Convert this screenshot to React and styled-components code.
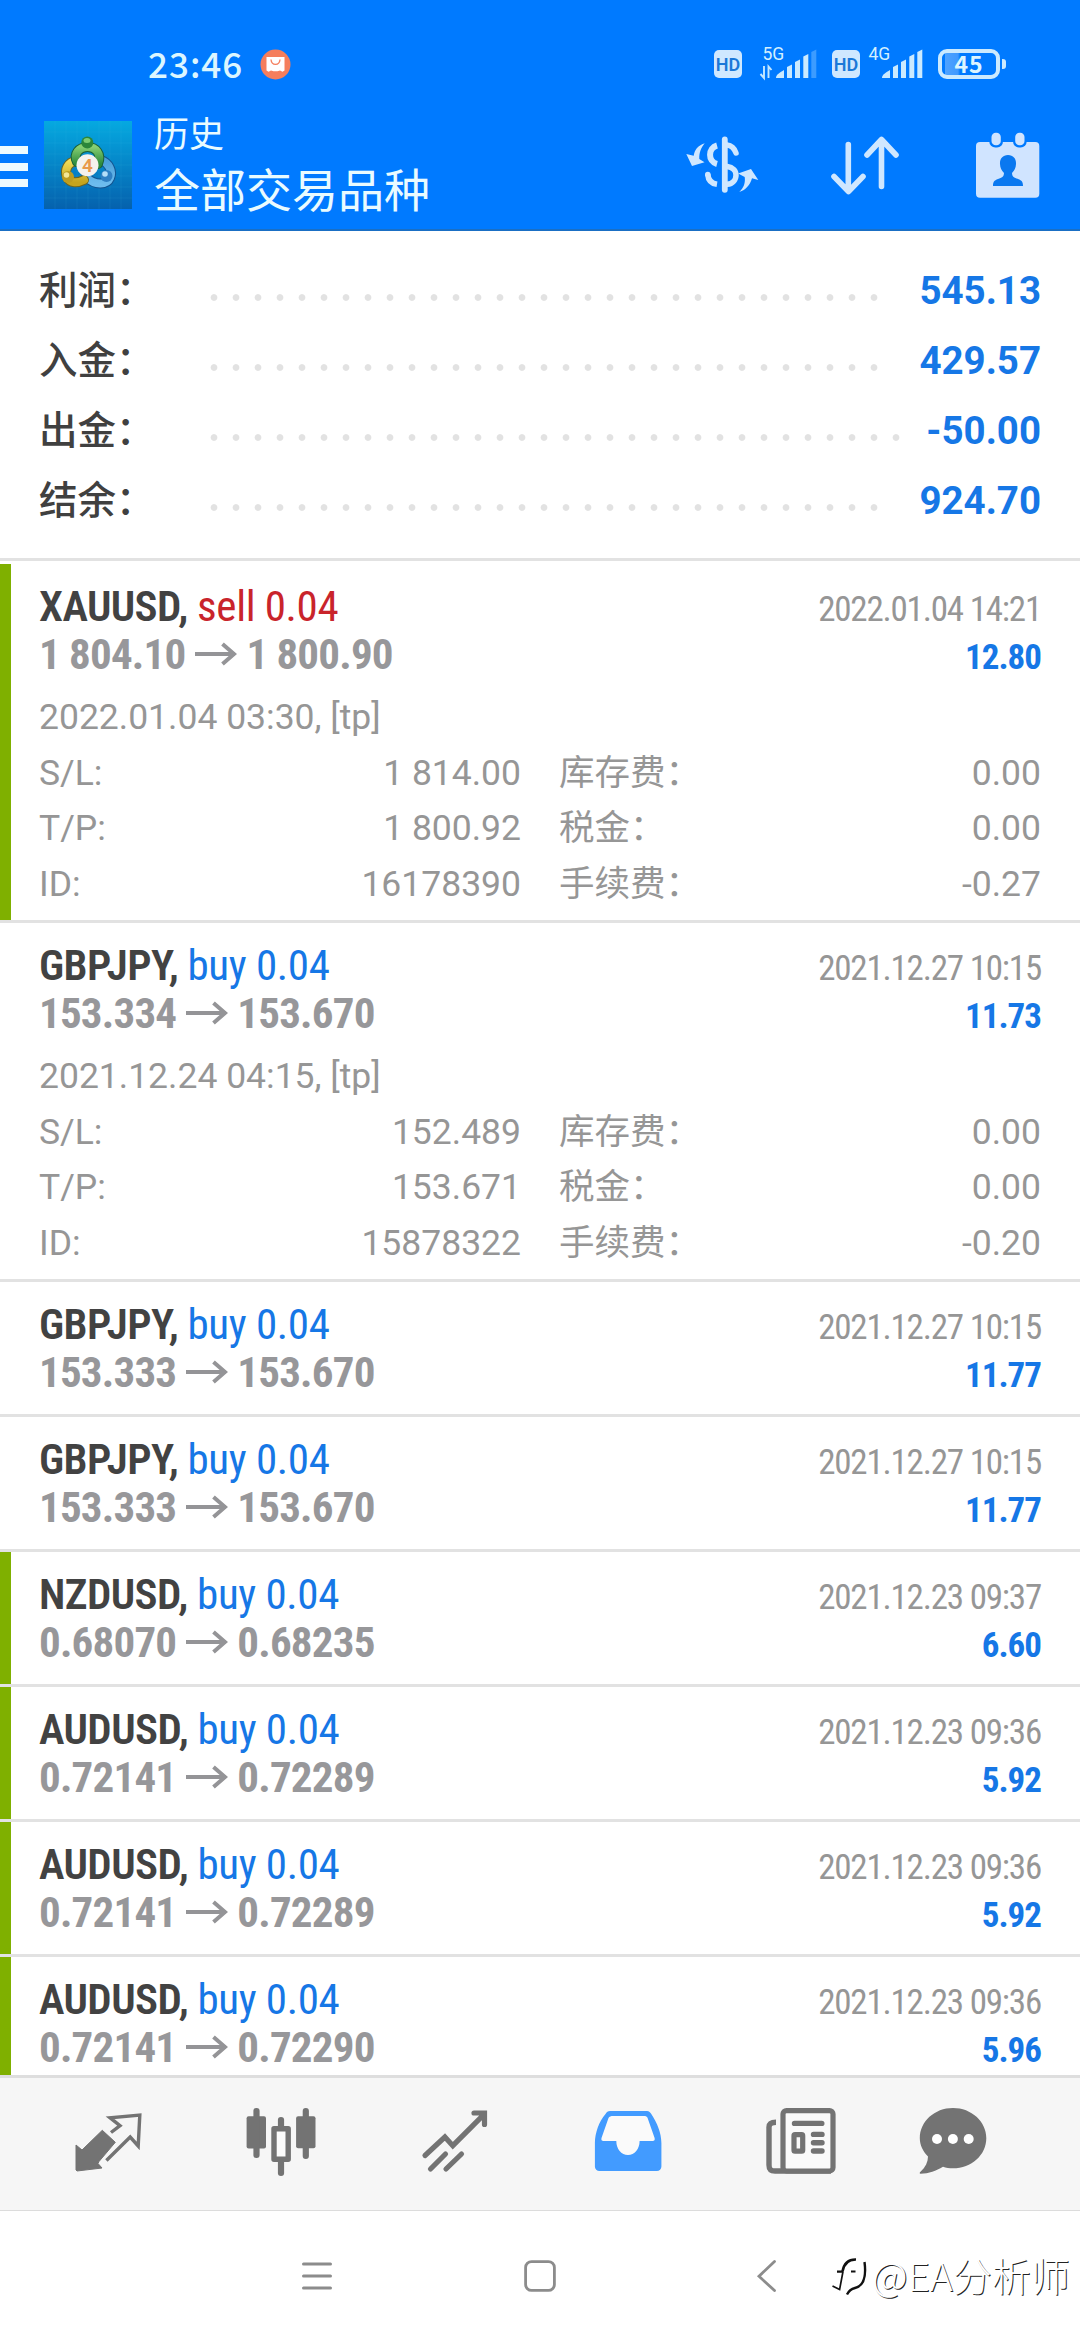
import styled, { createGlobalStyle } from "styled-components";

const summary = [
  { label: "利润：", value: "545.13", dots: 31 },
  { label: "入金：", value: "429.57", dots: 31 },
  { label: "出金：", value: "-50.00", dots: 32 },
  { label: "结余：", value: "924.70", dots: 31 },
];

const deals = [
  {
    symbol: "XAUUSD",
    side: "sell",
    volume: "0.04",
    open: "1 804.10",
    close: "1 800.90",
    time: "2022.01.04 14:21",
    profit: "12.80",
    marked: true,
    details: {
      opened: "2022.01.04 03:30, [tp]",
      sl: "1 814.00",
      tp: "1 800.92",
      id: "16178390",
      swap: "0.00",
      tax: "0.00",
      fee: "-0.27",
    },
  },
  {
    symbol: "GBPJPY",
    side: "buy",
    volume: "0.04",
    open: "153.334",
    close: "153.670",
    time: "2021.12.27 10:15",
    profit: "11.73",
    details: {
      opened: "2021.12.24 04:15, [tp]",
      sl: "152.489",
      tp: "153.671",
      id: "15878322",
      swap: "0.00",
      tax: "0.00",
      fee: "-0.20",
    },
  },
  { symbol: "GBPJPY", side: "buy", volume: "0.04", open: "153.333", close: "153.670", time: "2021.12.27 10:15", profit: "11.77" },
  { symbol: "GBPJPY", side: "buy", volume: "0.04", open: "153.333", close: "153.670", time: "2021.12.27 10:15", profit: "11.77" },
  { symbol: "NZDUSD", side: "buy", volume: "0.04", open: "0.68070", close: "0.68235", time: "2021.12.23 09:37", profit: "6.60", marked: true },
  { symbol: "AUDUSD", side: "buy", volume: "0.04", open: "0.72141", close: "0.72289", time: "2021.12.23 09:36", profit: "5.92", marked: true },
  { symbol: "AUDUSD", side: "buy", volume: "0.04", open: "0.72141", close: "0.72289", time: "2021.12.23 09:36", profit: "5.92", marked: true },
  { symbol: "AUDUSD", side: "buy", volume: "0.04", open: "0.72141", close: "0.72290", time: "2021.12.23 09:36", profit: "5.96", marked: true },
];

export default function App() {
  return (
    <>
      <GlobalStyle />
      <SCScreen>
        <SCTopArea>
          <StatusBar />
          <TitleBar />
        </SCTopArea>
        <SCSummary>
          {summary.map((row) => (
            <SCSummaryRow key={row.label}>
              <SCSummaryLabel>{row.label}</SCSummaryLabel>
              <SCDots $count={row.dots} />
              <SCSummaryValue>{row.value}</SCSummaryValue>
            </SCSummaryRow>
          ))}
        </SCSummary>
        <SCDealList>
          {deals.map((deal, index) => (
            <Deal key={index} deal={deal} />
          ))}
        </SCDealList>
        <TabBar />
        <SystemBar />
      </SCScreen>
    </>
  );
}

function StatusBar() {
  return (
    <SCStatusBar>
      <SCClock>23:46</SCClock>
      <svg width="31" height="31" viewBox="0 0 31 31">
        <circle cx="15.5" cy="15.5" r="15" fill="#f57e5c" />
        <path d="M6.5 8h18v13.5l-2 1.2-2.5-1.2-2.5.8h-4l-2.5-.8-2.5 1.2-2-1.2z" fill="#fff" />
        <path d="M11 10.500c.5 6.500 8.500 6.500 9 0" fill="none" stroke="#f57e5c" strokeWidth="1.300" />
      </svg>
      <SCStatusIcons>
        <SCHdBadge>HD</SCHdBadge>
        <Signal label="5G" $left={16} bars={4} transfer />
        <SCHdBadge $left={14}>HD</SCHdBadge>
        <Signal label="4G" $left={4} bars={5} />
        <SCBattery>
          <SCBatteryBody>45</SCBatteryBody>
          <SCBatteryNub />
        </SCBattery>
      </SCStatusIcons>
    </SCStatusBar>
  );
}

function Signal({ label, bars, transfer, $left }) {
  const shapes = [
    "M18 32c0-3.500 4-5.500 8-8v8z",
    "M29 21l5-2.500V32h-5z",
    "M37 16l5-2.500V32h-5z",
    "M45.300 10.500l5-2.500v24h-5z",
    "M53.300 6l5-2.500V32h-5z",
  ];
  return (
    <SCSignal $left={$left} width="60" height="44" viewBox="0 -5 60 44">
      <text x="4.500" y="13.500" fontSize="17.500" fill="#d3f0ff">
        {label}
      </text>
      {transfer && (
        <path d="M6 20v12l-3.500-4M10.500 32V20.500l3 3.500" fill="none" stroke="#c5e8ff" strokeWidth="1.900" />
      )}
      {shapes.map((d, i) => (
        <path key={d} d={d} fill="#cbeaff" opacity={i < bars ? 1 : 0.3} />
      ))}
    </SCSignal>
  );
}

function TitleBar() {
  return (
    <SCTitleBar>
      <SCMenuButton>
        <i />
        <i />
        <i />
      </SCMenuButton>
      <Logo />
      <SCTitles>
        <SCCaption>历史</SCCaption>
        <SCTitle>全部交易品种</SCTitle>
      </SCTitles>
      <SCActions>
        <svg width="78" height="64" viewBox="0 0 78 64">
          <g fill="none" stroke="#cfe7ff" strokeLinecap="round">
            <path d="M40.800 6.500v50.300" strokeWidth="5.800" />
            <path d="M43 12c5 .5 7.500 3.500 9 8" strokeWidth="5.500" />
            <path d="M43.300 33.500c5.500.8 8.700 4 8.700 8.500 0 5-3.500 8.800-8.700 9.300" strokeWidth="5.500" />
            <path d="M23.800 41.500c.4 5.500 4 9 9.200 9.800" strokeWidth="5.600" strokeLinecap="butt" />
            <path d="M33 12.500c-9 2.500-9.500 16 0 18.500" strokeWidth="6" strokeLinecap="butt" />
          </g>
          <circle cx="23.800" cy="41.500" r="2.800" fill="#cfe7ff" />
          <path
            d="M20.700 10.300C13.500 12.500 10.500 17.500 9.700 22.700L2.300 21 8 33l12.500-3.800-5.200-3.200c-.3-6 1.700-11.500 5.400-15.700zM55.300 59C60 54.700 61.500 49.500 60.700 44l-6.600-3.500L67 36l7.300 11-6.300-1.700C66 52 62 57 55.300 59z"
            fill="#cfe7ff"
          />
        </svg>
        <svg width="75" height="64" viewBox="0 0 75 64">
          <path
            d="M17.300 11.500v46M3 43.500l14.500 15 14.500-15M50.500 53.500V7M36 22L50.500 6.500 65 22"
            fill="none"
            stroke="#cfe7ff"
            strokeWidth="5.600"
            strokeLinecap="round"
            strokeLinejoin="round"
          />
        </svg>
        <svg width="66" height="68" viewBox="0 0 66 68">
          <rect x="1" y="11" width="63.300" height="55.700" rx="4" fill="#d0e4ff" />
          <rect x="14.300" y="0" width="13.700" height="16.500" rx="6" fill="#007aff" />
          <rect x="38" y="0" width="13.700" height="16.500" rx="6" fill="#007aff" />
          <rect x="16.500" y="1.700" width="9.300" height="12.600" rx="4.300" fill="#d0e4ff" />
          <rect x="40.200" y="1.700" width="9.300" height="12.600" rx="4.300" fill="#d0e4ff" />
          <path
            d="M33 24c5.500 0 8.300 4 8 9-.2 4-1.500 6.500-4 9 .2 4 2 4.500 6 6s5 3 5 7H18c0-4 1-5.500 5-7s5.800-2 6-6c-2.500-2.500-3.800-5-4-9-.3-5 2.500-9 8-9z"
            fill="#0a78f0"
          />
        </svg>
      </SCActions>
    </SCTitleBar>
  );
}

function Logo() {
  return (
    <SCLogo width="88" height="88" viewBox="0 0 88 88">
      <defs>
        <linearGradient id="tile" x1="0" y1="0" x2="0" y2="1">
          <stop offset="0" stopColor="#05a9e0" />
          <stop offset=".5" stopColor="#0585c8" />
          <stop offset="1" stopColor="#0561ad" />
        </linearGradient>
        <linearGradient id="green" x1="0" y1="0" x2="0" y2="1">
          <stop offset="0" stopColor="#86cf72" />
          <stop offset="1" stopColor="#2c8a3c" />
        </linearGradient>
        <linearGradient id="yellow" x1="0" y1="0" x2="0" y2="1">
          <stop offset="0" stopColor="#f0dc58" />
          <stop offset="1" stopColor="#c4a41e" />
        </linearGradient>
        <linearGradient id="blue" x1="0" y1="0" x2="0" y2="1">
          <stop offset="0" stopColor="#4a9fd8" />
          <stop offset="1" stopColor="#6cbcee" />
        </linearGradient>
      </defs>
      <rect width="88" height="88" fill="url(#tile)" />
      <path
        d="M11 0v88M22 0v88M33 0v88M44 0v88M55 0v88M66 0v88M77 0v88M0 11h88M0 22h88M0 33h88M0 44h88M0 55h88M0 66h88M0 77h88"
        stroke="#5cc4f0"
        strokeOpacity=".1"
      />
      <g fill="none" strokeLinecap="round">
        <path d="M57 39c8 3 12 11 9 18s-15 8-24-1" stroke="#135490" strokeWidth="10" />
        <path d="M57 39c8 3 12 11 9 18s-15 8-24-1" stroke="url(#blue)" strokeWidth="8" />
        <path d="M32 40c-8 1-12 9-9 16s11 6 17 3" stroke="#6c6520" strokeWidth="10" />
        <path d="M32 40c-8 1-12 9-9 16s11 6 17 3" stroke="url(#yellow)" strokeWidth="8" />
        <path d="M33 41c-4-8 2-15 10.500-15S58 33 54 43" stroke="#195f38" strokeWidth="10" />
        <path d="M33 41c-4-8 2-15 10.500-15S58 33 54 43" stroke="url(#green)" strokeWidth="8" />
      </g>
      <circle cx="43.300" cy="21.500" r="6" fill="#2b863a" />
      <ellipse cx="43" cy="19.500" rx="3.500" ry="2.500" fill="#7ccc74" />
      <circle cx="24" cy="56" r="6" fill="#bd9d20" />
      <circle cx="22.500" cy="54" r="2.800" fill="#f4e795" />
      <circle cx="62.500" cy="55" r="6" fill="#2f80c4" />
      <circle cx="61" cy="53" r="2.800" fill="#b4def8" />
      <circle cx="43.500" cy="44.300" r="11" fill="#f4f2ee" />
      <text x="43.500" y="51" textAnchor="middle" fontSize="19" fontWeight="600" fill="#e89a4c">
        4
      </text>
    </SCLogo>
  );
}

function Deal({ deal }) {
  const { details } = deal;
  return (
    <SCDeal $marked={deal.marked} $open={!!details}>
      <SCDealLine>
        <SCSymbol>
          {deal.symbol},{" "}
          <SCSide $side={deal.side}>
            {deal.side} {deal.volume}
          </SCSide>
        </SCSymbol>
        <SCTime>{deal.time}</SCTime>
      </SCDealLine>
      <SCDealLine>
        <SCPrices>
          {deal.open}
          <svg width="42" height="26" viewBox="0 0 42 26">
            <path d="M0 13h39M27.500 3l11.500 10-11.500 10" fill="none" stroke="#949497" strokeWidth="4" />
          </svg>
          {deal.close}
        </SCPrices>
        <SCProfit>{deal.profit}</SCProfit>
      </SCDealLine>
      {details && (
        <SCDetails>
          <SCOpened>{details.opened}</SCOpened>
          <Pair label="S/L:" value={details.sl} />
          <Pair label="库存费：" value={details.swap} />
          <Pair label="T/P:" value={details.tp} />
          <Pair label="税金：" value={details.tax} />
          <Pair label="ID:" value={details.id} />
          <Pair label="手续费：" value={details.fee} />
        </SCDetails>
      )}
    </SCDeal>
  );
}

function Pair({ label, value }) {
  return (
    <SCPair>
      <span>{label}</span>
      <span>{value}</span>
    </SCPair>
  );
}

function TabBar() {
  return (
    <SCTabBar>
      <SCTabIcon viewBox="0 0 80 80">
        <path
          d="M8 41l6 5 20.300-19.700 13 12L31 57.500l-1 2 4 4.500L9 67l-1-1z"
          fill="#737373"
          stroke="#737373"
          strokeLinejoin="round"
        />
        <path d="M43 28.500l9-6.800-10-8 29.800-2.700-1.600 31-8-9-23.800 23.500" fill="none" stroke="#737373" strokeWidth="3.400" />
      </SCTabIcon>
      <SCTabIcon viewBox="0 0 80 80">
        <g fill="#737373">
          <rect x="5.600" y="12.300" width="19.400" height="32.300" rx="2" />
          <rect x="12.400" y="4" width="6.200" height="50" rx="3" />
          <rect x="55.100" y="12.300" width="19.400" height="32" rx="2" />
          <rect x="61.700" y="4" width="6.200" height="51" rx="3" />
          <rect x="36.900" y="13" width="6.200" height="14" rx="3" />
          <rect x="36.900" y="55" width="6.200" height="17" rx="3" />
        </g>
        <rect x="33" y="24.800" width="14.200" height="30.500" fill="#fbfbfb" stroke="#737373" strokeWidth="5.400" strokeLinejoin="round" />
      </SCTabIcon>
      <SCTabIcon viewBox="0 0 80 80">
        <path
          d="M10 51.500L29.900 33l7.900 8.700 30-30M59 9h10.500v11.500M15.500 65l15-15M31 65l15.500-15"
          fill="none"
          stroke="#737373"
          strokeWidth="5.200"
          strokeLinecap="round"
        />
      </SCTabIcon>
      <SCTabIcon viewBox="0 0 80 80">
        <path
          d="M22 7h37c2 0 3.500 1.500 4.300 3 6 9 10 19 10.100 29v23.500a4.500 4.500 0 0 1-4.500 4.500H11.400A4.500 4.500 0 0 1 6.900 62.500V39C7 29 11 17.500 17.500 10 18.500 8 20 7 22 7z"
          fill="#429bff"
        />
        <path
          d="M25 12h31c1.800 0 3 .6 3.600 2l7 20c.5 1.700-.2 3-2 3H51.600c0 8-5 14-11.600 14s-11.700-6-11.700-14H15.500c-1.800 0-2.500-1.300-2-3l7-20c.8-1.400 2.500-2 4.500-2z"
          fill="#fafafa"
        />
      </SCTabIcon>
      <SCTabIcon viewBox="0 0 80 80">
        <path
          d="M15 18.300c-4.500 0-7 1.700-7 5V61c0 4.500 2 6 6 6h56"
          fill="none"
          stroke="#737373"
          strokeWidth="5.400"
        />
        <rect x="22" y="6.600" width="50" height="60.400" rx="3.500" fill="#fafafa" stroke="#737373" strokeWidth="5.200" />
        <path
          d="M33.500 19.400h27.300M52.500 30.400h8.500M52.500 38.700h8.500M52.500 47h8.500"
          stroke="#737373"
          strokeWidth="5.400"
          strokeLinecap="round"
        />
        <rect x="33" y="30.700" width="8.700" height="16.500" rx="1" fill="none" stroke="#737373" strokeWidth="5.200" />
      </SCTabIcon>
      <SCTabIcon viewBox="0 0 80 80">
        <path
          d="M40 4c18.500 0 33.300 13.500 33.300 30.200S58.500 64.300 40 64.300c-3.500 0-7-.5-10-1.500-7 4-14 7-22.500 7-1.300 0-.8-1.300 0-2C12.500 63 15 58 15 52.500 10 47.500 6.800 41 6.800 34.200 6.800 17.500 21.500 4 40 4z"
          fill="#737373"
        />
        <circle cx="24" cy="35" r="5" fill="#fff" />
        <circle cx="39.900" cy="35" r="5" fill="#fff" />
        <circle cx="55.700" cy="35" r="5" fill="#fff" />
      </SCTabIcon>
    </SCTabBar>
  );
}

function SystemBar() {
  return (
    <SCSystemBar>
      <svg width="34" height="34" viewBox="0 0 34 34">
        <path d="M3.500 5h27M3.500 17h27M3.500 29h27" stroke="#8c8c8c" strokeWidth="3" strokeLinecap="round" />
      </svg>
      <svg width="34" height="34" viewBox="0 0 34 34">
        <rect x="2.600" y="2.600" width="28.800" height="28.800" rx="6" fill="none" stroke="#8c8c8c" strokeWidth="2.800" />
      </svg>
      <svg width="34" height="34" viewBox="0 0 34 34">
        <path d="M28.500 2.500L13 17.300l15.500 14.200" fill="none" stroke="#8c8c8c" strokeWidth="2.800" strokeLinecap="round" />
      </svg>
      <SCWatermark>
        <svg width="40" height="42" viewBox="0 0 40 42">
          <g fill="none" stroke="#111">
            <path d="M12.500 15.500C14 7 18 3.300 26 3.500" strokeWidth="2.600" />
            <path d="M7 15.700h6M21 15.500h4.500" strokeWidth="2.200" />
            <path d="M13 15.500L9.600 33.500 2.500 30" strokeWidth="1.700" />
            <path d="M34.500 6c2 15-1 24-9.500 26-4 1-6 2.500-8 6.500" strokeWidth="2.400" />
          </g>
        </svg>
        <SCAuthor>@EA分析师</SCAuthor>
      </SCWatermark>
    </SCSystemBar>
  );
}

const GlobalStyle = createGlobalStyle`
  body {
    margin: 0;
    background: #fff;
    font-family: Roboto, "Noto Sans CJK SC", sans-serif;
  }

  svg {
    display: block;
    flex-shrink: 0;
  }
`;

const SCScreen = styled.div`
  display: flex;
  flex-direction: column;
  width: 1080px;
  height: 2340px;
  overflow: hidden;
  background: #fff;
`;

const SCTopArea = styled.header`
  height: 231px;
  box-sizing: border-box;
  background: #007aff;
  border-bottom: 2px solid #1a6fc4;
`;

const SCStatusBar = styled.div`
  display: flex;
  align-items: center;
  height: 82px;
  padding: 46px 74px 0 148px;
  box-sizing: border-box;
`;

const SCClock = styled.span`
  width: 112px;
  margin-top: -3px;
  font-family: "Noto Sans CJK SC", sans-serif;
  font-weight: 500;
  font-size: 35px;
  line-height: 36px;
  letter-spacing: 1px;
  color: #dcf6ff;
`;

const SCStatusIcons = styled.div`
  display: flex;
  align-items: center;
  margin-left: auto;
`;

const SCHdBadge = styled.span`
  width: 28px;
  height: 28px;
  margin-left: ${(props) => props.$left || 0}px;
  border-radius: 5px;
  background: #cfe8ff;
  font-weight: 600;
  font-size: 18px;
  line-height: 30px;
  text-align: center;
  color: #1b78d8;
`;

const SCSignal = styled.svg`
  margin: -3px 0 0 ${(props) => props.$left}px;
  overflow: visible;
  font-family: Roboto, sans-serif;
`;

const SCBattery = styled.div`
  display: flex;
  align-items: center;
  gap: 2px;
  margin-left: 14px;
`;

const SCBatteryBody = styled.span`
  width: 62px;
  height: 30px;
  box-sizing: border-box;
  border: 4px solid #cbeaff;
  border-radius: 9px;
  background: linear-gradient(90deg, #007aff 3px, #4fa3ff 3px, #3f99ff 16px, #007aff 18px);
  font-family: "Noto Sans CJK SC", sans-serif;
  font-weight: 700;
  font-size: 23px;
  line-height: 21px;
  letter-spacing: 1px;
  text-align: center;
  color: #dcf6ff;
`;

const SCBatteryNub = styled.i`
  width: 4px;
  height: 10px;
  border-radius: 0 3px 3px 0;
  background: #cbeaff;
`;

const SCTitleBar = styled.div`
  display: flex;
  align-items: center;
  height: 147px;
  padding-right: 39px;
`;

const SCMenuButton = styled.div`
  display: flex;
  flex-direction: column;
  gap: 8.500px;
  width: 28px;
  margin: 22px 16px 0 0;

  i {
    height: 8px;
    background: #ecfaff;
  }
`;

const SCLogo = styled.svg`
  margin-top: 18px;
  font-family: Roboto, sans-serif;
`;

const SCTitles = styled.div`
  display: flex;
  flex-direction: column;
  margin: 17px 0 0 22px;
  font-family: "Noto Sans CJK SC", sans-serif;
  color: #e9fbff;
`;

const SCCaption = styled.span`
  font-size: 35px;
  line-height: 46px;
`;

const SCTitle = styled.strong`
  font-weight: 400;
  font-size: 46px;
  line-height: 64px;
`;

const SCActions = styled.div`
  display: flex;
  align-items: center;
  gap: 69px;
  margin: 18px 0 0 auto;
`;

const SCSummary = styled.section`
  height: 333px;
  padding: 25px 39px 0;
  box-sizing: border-box;
  background: linear-gradient(#e2e2e2, #e2e2e2) 0 327px / 100% 3px no-repeat;
`;

const SCSummaryRow = styled.div`
  display: flex;
  font-size: 38.500px;
  line-height: 70px;
`;

const SCSummaryLabel = styled.span`
  width: 163.500px;
  font-weight: 500;
  color: #404040;
  white-space: nowrap;
`;

const SCDots = styled.span`
  width: ${(props) => props.$count * 22}px;
  background: radial-gradient(circle at 11px 41.500px, #e2e2e2 2.900px, transparent 3.800px) 0 0 / 22px 70px repeat-x;
`;

const SCSummaryValue = styled.span`
  margin-left: auto;
  font-weight: 700;
  color: #1677e6;
`;

const SCDealList = styled.main`
  height: 1511px;
  overflow: hidden;
`;

const SCDeal = styled.article`
  height: ${(props) => (props.$open ? 359 : 135)}px;
  padding: 18px 39px 0;
  box-sizing: border-box;
  border-bottom: 3px solid #e2e2e2;
  background: linear-gradient(#7fb000, #7fb000) 0 0 / ${(props) => (props.$marked ? 11 : 0)}px 100% no-repeat;
`;

const SCDealLine = styled.div`
  display: flex;
  align-items: baseline;
  justify-content: space-between;
  height: 48px;
  line-height: 48px;
  font-stretch: 75%;
`;

const SCSymbol = styled.span`
  font-weight: 600;
  font-size: 43px;
  letter-spacing: -0.6px;
  color: #424242;
`;

const SCSide = styled.span`
  font-weight: 400;
  letter-spacing: -0.35px;
  color: ${(props) => (props.$side === "sell" ? "#c9242b" : "#1677e6")};
`;

const SCTime = styled.span`
  font-size: 35px;
  letter-spacing: -1.2px;
  color: #969696;
`;

const SCPrices = styled.span`
  display: flex;
  align-items: center;
  gap: 9.500px;
  font-weight: 700;
  font-size: 43px;
  letter-spacing: -0.8px;
  color: #97979a;
`;

const SCProfit = styled.span`
  font-weight: 700;
  font-size: 35px;
  letter-spacing: -1px;
  color: #1677e6;
`;

const SCDetails = styled.div`
  display: grid;
  grid-template-columns: 482px 482px;
  column-gap: 38px;
  margin-top: 12px;
  font-size: 35.500px;
  line-height: 55.500px;
  color: #969696;
`;

const SCOpened = styled.span`
  grid-column: 1 / -1;
`;

const SCPair = styled.div`
  display: flex;
  justify-content: space-between;
`;

const SCTabBar = styled.nav`
  display: flex;
  height: 136px;
  padding: 26px 0 0 68px;
  box-sizing: border-box;
  border-top: 3px solid #dedede;
  border-bottom: 1px solid #dcdcdc;
  background: #f6f6f6;
`;

const SCTabIcon = styled.svg`
  width: 80px;
  height: 80px;
  margin-right: 93.300px;

  &:last-child {
    margin-left: -21.500px;
    margin-right: 0;
  }
`;

const SCSystemBar = styled.footer`
  position: relative;
  display: flex;
  align-items: center;
  gap: 189px;
  height: 129px;
  padding-left: 300px;
`;

const SCWatermark = styled.div`
  position: absolute;
  left: 830px;
  top: 36px;
  display: flex;
  align-items: center;
  gap: 2px;
  height: 60px;
`;

const SCAuthor = styled.span`
  margin-top: -6px;
  font-family: "Noto Sans CJK SC", sans-serif;
  font-weight: 300;
  font-size: 39px;
  white-space: nowrap;
  color: #fff;
  text-shadow: 1px 1px 0 #222;
`;
